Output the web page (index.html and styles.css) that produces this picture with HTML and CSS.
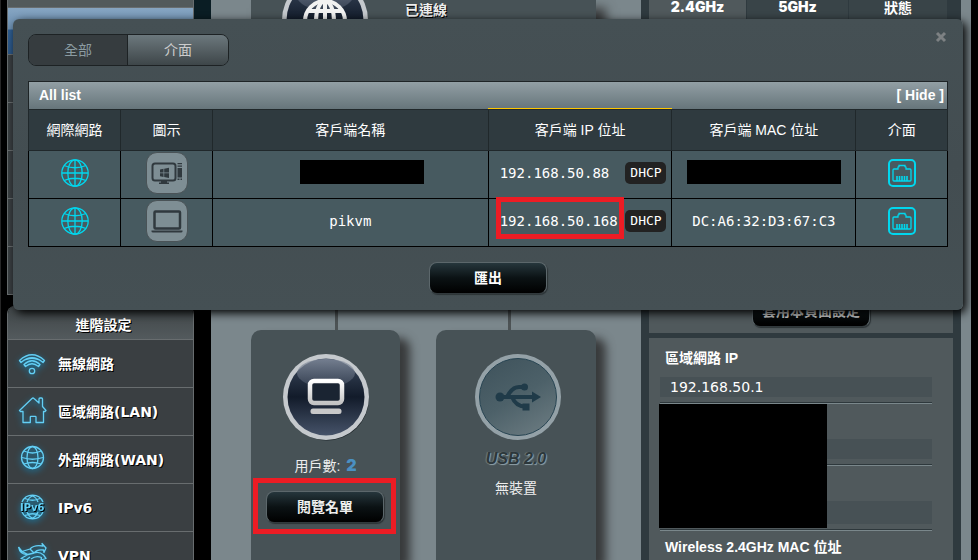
FILE: index.html
```html
<!DOCTYPE html>
<html lang="zh-Hant">
<head>
<meta charset="utf-8">
<title>網路地圖</title>
<link rel="stylesheet" href="styles.css">
</head>
<body>
<svg class="defs" aria-hidden="true">
  <defs>
    <linearGradient id="chrome" x1="0" y1="0" x2="0" y2="1"><stop offset="0" stop-color="#fff"/><stop offset="1" stop-color="#c4c4c4"/></linearGradient>
    <linearGradient id="navy" x1="0" y1="0" x2="0" y2="1"><stop offset="0" stop-color="#3c4a5e"/><stop offset=".5" stop-color="#121b2a"/><stop offset="1" stop-color="#465369"/></linearGradient>
    <linearGradient id="gloss" x1="0" y1="0" x2="0" y2="1"><stop offset="0" stop-color="#8790a0" stop-opacity=".75"/><stop offset="1" stop-color="#566173" stop-opacity=".45"/></linearGradient>
    <linearGradient id="slate" x1=".2" y1="0" x2=".8" y2="1"><stop offset="0" stop-color="#40545d"/><stop offset=".5" stop-color="#4d6169"/><stop offset="1" stop-color="#6a7a80"/></linearGradient>
  </defs>
  <symbol id="globe" viewBox="0 0 28 28">
    <g fill="none" stroke="currentColor" stroke-width="1.3"><circle cx="14" cy="14" r="13.2"/><ellipse cx="14" cy="14" rx="7.2" ry="13.2"/><path d="M14 1v26M1 14h26M3 6.5Q14 11 25 6.5M3 21.5Q14 17 25 21.5"/></g>
  </symbol>
  <symbol id="jack" viewBox="0 0 28 28">
    <g fill="none" stroke="currentColor"><rect x="1" y="1" width="26" height="26" rx="4" stroke-width="2"/><path stroke-width="1.3" d="M6 22q-1 0-1-1V11q0-1 1-1h4V8.500q0-1 1-1V6.500h6v1q1 0 1 1V10h4q1 0 1 1v10q0 1-1 1Z"/><path stroke-width="1.600" d="M9 22v-5M11.500 22v-5M14 22v-5M16.500 22v-5M19 22v-5"/></g>
  </symbol>
</svg>

<div class="page">
  <nav class="sidebar">
    <ul class="menu general">
      <li class="menu-title"></li>
      <li class="active"></li><li></li><li></li><li></li><li></li><li></li>
    </ul>
    <ul class="menu">
      <li class="menu-title">進階設定</li>
      <li><a href="#wireless"><svg class="nav-icon" viewBox="0 0 32 32"><path d="M3.500 12.500Q16 1 28.500 12.500L27 14.500Q16 5 5 14.500ZM8 16.500Q16 9 24 16.500L22.500 18.500Q16 13 9.500 18.500ZM10.500 11.500Q16 9 21.500 11.500"/><circle cx="16" cy="23" r="2.700"/></svg>無線網路</a></li>
      <li><a href="#lan"><svg class="nav-icon" viewBox="0 0 32 32"><path d="M7 15.500H4.500L3.500 14.500 16 2.500q1-1 2 0L23 7V3q0-1 1-1h1.500q1 0 1 1v7.500L30 14.500 29 15.500H27.500V26.500H20V21q0-.7-.7-.7H15q-.7 0-.7.7v5.500H7Z"/></svg>區域網路(LAN)</a></li>
      <li><a href="#wan"><svg class="nav-icon" viewBox="0 0 32 32"><circle cx="16.500" cy="13.500" r="11"/><ellipse cx="16.500" cy="13.500" rx="5.500" ry="11"/><path d="M8 7Q16.500 11 25 7M6 13.500Q16.500 17 27 13.500M8 20Q16.500 17 25 20"/></svg>外部網路(WAN)</a></li>
      <li><a href="#ipv6"><svg class="nav-icon" viewBox="0 0 32 32"><path d="M6 10a11.500 11.500 0 0 1 21 0M6 20a11.500 11.500 0 0 0 21 0M11 10Q13 5 16.500 4Q20 5 22 10M11 20Q13 25 16.500 26Q20 25 22 20M9 6.500Q16.500 10 24 6.500M9 23.500Q16.500 20 24 23.500"/><text class="v6" x="4" y="18.500">IPv6</text></svg>IPv6</a></li>
      <li><a href="#vpn"><svg class="nav-icon" viewBox="0 0 32 32"><path d="M2.500 7 6 11.500 14 9Q18 4.500 27 6L26 3.500 30 8 28 12.500 27.500 10Q21 9 18 13Q23 11 27.500 15L30 18.500 25 20 25.500 17.500Q20 15 15 19M2.500 7Q4 15 12 14.500L5 18.500 10 20 14 17M14 9 18 13 12 14.500M6 11.500 12 14.500"/></svg>VPN</a></li>
    </ul>
  </nav>
  <div class="gutter"></div>

  <div class="content">
    <main class="map">
      <section class="card internet">
        <svg class="orb" viewBox="0 0 88 88"><circle cx="45" cy="45.500" r="42" fill="#20282c"/><circle cx="44" cy="44" r="43" fill="#c5c9cd"/><circle cx="44" cy="44" r="38.500" fill="url(#navy)"/><ellipse cx="44" cy="20" rx="28" ry="14" fill="url(#gloss)"/><g fill="none" stroke="#f2f2f2" stroke-width="4"><circle cx="44" cy="45" r="20"/><ellipse cx="44" cy="45" rx="9" ry="20"/><path d="M44 25v40M24 45h40M28 35h32M28 55h32"/></g></svg>
        <p class="net-state">已連線</p>
      </section>
      <div class="devices">
        <section class="card clients">
          <svg class="orb" viewBox="0 0 88 88"><circle cx="45" cy="45.500" r="42" fill="#20282c"/><circle cx="44" cy="44" r="43" fill="#c5c9cd"/><circle cx="44" cy="44" r="38.500" fill="url(#navy)"/><ellipse cx="44" cy="20" rx="29" ry="14" fill="url(#gloss)"/><rect x="28" y="28" width="32" height="22" rx="4" fill="#1a2432" stroke="url(#chrome)" stroke-width="4.500"/><rect x="28.500" y="55.500" width="31" height="5.500" rx="2.500" fill="#c8c8c8"/></svg>
          <p class="count">用戶數: <b>2</b></p>
          <div class="marked"><button class="btn" type="button">閱覽名單</button></div>
        </section>
        <section class="card usb">
          <svg class="orb" viewBox="0 0 88 88"><circle cx="44" cy="44" r="43" fill="#94a1a7"/><circle cx="44" cy="44" r="38.500" fill="url(#slate)" stroke="#274452"/><g fill="none" stroke="#203b49" stroke-width="4"><path d="M26 44h34M33 44Q38 34 45 34h5M38 44Q42 53.500 51 53.500"/></g><g fill="#203b49"><circle cx="26" cy="44" r="4.500"/><circle cx="50.500" cy="34" r="3.500"/><rect x="48.500" y="50.500" width="7" height="7"/><path d="M58 38.500 67 44 58 49.500Z"/></g></svg>
          <p class="usb-name">USB 2.0</p>
          <p class="usb-state">無裝置</p>
        </section>
      </div>
    </main>

    <aside class="status">
      <div class="status-tabs">
        <button type="button" class="on">2.4GHz</button><button type="button">5GHz</button><button type="button" class="cjk">狀態</button>
      </div>
      <section class="panel apply"><button class="btn" type="button">套用本頁面設定</button></section>
      <section class="panel lan">
        <div class="entry"><h3>區域網路 IP</h3><p class="value">192.168.50.1</p></div>
        <div class="entry"><h3></h3><p class="value"></p></div>
        <div class="entry tall"><h3></h3><p class="value"></p></div>
        <div class="entry"><h3>Wireless 2.4GHz MAC 位址</h3><p class="value"></p></div>
        <div class="redacted"></div>
      </section>
    </aside>
  </div>
</div>

<div class="modal" role="dialog" aria-label="All list">
  <button class="close" type="button" aria-label="關閉"><svg viewBox="0 0 12 12"><path d="M2 2l8 8M10 2l-8 8"/></svg></button>
  <div class="switch"><button type="button" class="pressed">全部</button><button type="button">介面</button></div>
  <div class="list-bar"><span>All list</span><button type="button">[ Hide ]</button></div>
  <table class="list">
    <thead>
      <tr><th class="narrow">網際網路</th><th class="narrow">圖示</th><th class="wide">客戶端名稱</th><th class="mid sorted">客戶端 IP 位址</th><th class="mid">客戶端 MAC 位址</th><th>介面</th></tr>
    </thead>
    <tbody>
      <tr>
        <td><svg class="cyan"><use href="#globe"/></svg></td>
        <td><svg class="device" viewBox="0 0 40 40"><g fill="none" stroke="#30393e"><rect x="5.500" y="10.500" width="23" height="17" rx="2.500" stroke-width="2"/></g><g fill="#30393e"><path d="M13 16.500l3.500-.7v3.700H13ZM17.200 15.700l4.800-1v4.800h-4.800ZM13 20.200h3.500v3.700l-3.500-.7ZM17.200 20.200H22V25l-4.800-1ZM14 28h6v1.500h2V31H12v-1.500h2ZM30.500 10H35v1.300h-4.500ZM30.500 12.500H35v1.300h-4.500ZM30.500 15H35v9.500h-4.500ZM30.500 25.500h2V27h-2ZM33.500 25.500H35V27h-1.500Z"/></g></svg></td>
        <td><span class="mask name-mask"></span></td>
        <td><div class="ip"><span>192.168.50.88</span><span class="badge">DHCP</span></div></td>
        <td><span class="mask mac-mask"></span></td>
        <td><svg class="cyan"><use href="#jack"/></svg></td>
      </tr>
      <tr>
        <td><svg class="cyan"><use href="#globe"/></svg></td>
        <td><svg class="device" viewBox="0 0 40 40"><rect x="7.500" y="10.500" width="25.500" height="17" rx="1" fill="none" stroke="#30393e" stroke-width="2.500"/><path fill="#30393e" d="M4.500 29.500h31v1q0 1-1.500 1H6q-1.500 0-1.500-1Z"/></svg></td>
        <td>pikvm</td>
        <td><div class="ip flagged"><span>192.168.50.168</span><span class="badge">DHCP</span></div></td>
        <td>DC:A6:32:D3:67:C3</td>
        <td><svg class="cyan"><use href="#jack"/></svg></td>
      </tr>
    </tbody>
  </table>
  <div class="actions"><button class="btn" type="button">匯出</button></div>
</div>
</body>
</html>
```
FILE: styles.css
```css
*, *::before, *::after { box-sizing: border-box; }
body {
  margin: 0;
  height: 100vh;
  overflow: hidden;
  position: relative;
  background: #000;
  color: #fff;
  font: 14px/20px "Liberation Sans", "Noto Sans CJK TC", sans-serif;
}
p, h3, ul { margin: 0; padding: 0; }
ul { list-style: none; }
button { font: inherit; color: inherit; border: 0; background: none; padding: 0; cursor: pointer; }
.defs { position: absolute; width: 0; height: 0; }

.page {
  display: flex;
  height: 100vh;
  overflow: hidden;
  padding: 0 7px 0 6px;
  border-left: 1px solid #262626;
}

/* sidebar */
.sidebar { flex: 0 0 187px; font-family: "DejaVu Sans", "Noto Sans CJK TC", sans-serif; font-weight: bold; }
.menu {
  border: 1px solid #686d6f;
  border-top: 0;
  border-radius: 8px 8px 0 0;
  overflow: hidden;
  margin-bottom: 11px;
  text-shadow: 1px 1px 0 #000;
}
.menu li { height: 48px; background: #3a3f42; border-top: 1px solid #686d6f; }
.menu .menu-title {
  height: 33px;
  border-top: 0;
  line-height: 39px;
  padding-left: 6px;
  text-align: center;
  background: linear-gradient(#3f4547, #535a5d);
}
.general { border-radius: 0; }
.menu.general .menu-title { height: 7px; background: #525a5c; }
.menu.general .active { height: 47px; background: linear-gradient(#86a5c2, #6c90b2 21px, #2f5f93 22px, #2b5686); }
.menu a { display: flex; align-items: center; gap: 10px; height: 47px; padding-left: 8px; color: #fff; text-decoration: none; }
.nav-icon {
  width: 32px;
  height: 32px;
  fill: none;
  stroke: #63cff5;
  stroke-width: 1.3;
  stroke-linejoin: round;
  filter: drop-shadow(0 2px 3px #1187b8);
}
.v6 { font: bold 10px "DejaVu Sans", sans-serif; fill: #63cff5; stroke: none; }
.gutter { flex: 0 0 17px; background: linear-gradient(#0a1d24, #0a1d24 100px, #000 280px); }

/* network map */
.content { flex: 1; display: flex; background: #7b878c; padding-right: 10px; }
.map { flex: 1; padding: 0 45px 0 40px; display: flex; flex-direction: column; }
.card { background: #475256; box-shadow: 10px 8px 10px #383a3b; position: relative; }
.orb { width: 88px; height: 88px; display: block; }
.internet { height: 200px; display: flex; }
.internet .orb { margin: -24px 0 0 30px; }
.net-state { margin-left: 36px; font-weight: bold; text-shadow: 1px 1px 0 #000; color: #eee; }
.devices { flex: 1; display: flex; gap: 36px; padding-top: 130px; }
.devices .card { border-radius: 10px 10px 0 0; padding-top: 23px; display: flex; flex-direction: column; align-items: center; color: #eee; }
.devices .card::before {
  content: "";
  position: absolute;
  bottom: 100%;
  left: 84px;
  height: 130px;
  width: 3px;
  background: #4d5355;
}
.devices .usb::before { left: 72px; }
.clients { flex: 149; }
.usb { flex: 160; }
.usb .orb { margin-left: 4px; }
.count { margin-top: 14px; }
.count b { font: 900 16px/20px Inter, sans-serif; color: #4a90c2; margin-left: 2px; }
.marked { border: 5px solid #ed1c24; padding: 8px; margin-top: 2px; width: 143px; height: 56px; margin-right: 2px; }
.usb-name {
  margin-top: 8px;
  font: italic bold 16px/20px "Liberation Sans Narrow", "Liberation Sans", sans-serif;
  color: #2c373b;
  text-shadow: 1px 1px 1px #91a3aa, -1px 0 1px #6d7f86;
}
.usb-state { margin-top: 9px; }

.btn {
  display: block;
  width: 118px;
  height: 32px;
  border: 1px solid #5c676b;
  border-bottom-color: #31393c;
  border-radius: 8px;
  background: linear-gradient(#26363c, #0b1214 50%, #000);
  box-shadow: 1px 1px 1px #2c3336;
  font-weight: bold;
  line-height: 30px;
  text-align: center;
}

/* status column */
.status { flex: 0 0 320px; padding: 0 8px; background: #2f3a3f; display: flex; flex-direction: column; }
.status-tabs { display: grid; grid-template-columns: 97px 101px 98px; gap: 1px; height: 20px; }
.status-tabs button { background: #394448; font: 900 14px/14px Inter, sans-serif; padding-bottom: 6px; }
.status-tabs .on { background: #50595c; }
.status-tabs .cjk { font: bold 14px/14px "Noto Sans CJK TC", sans-serif; }
.panel { background: #50595c; }
.apply { flex: 0 0 313px; display: flex; justify-content: center; align-items: flex-end; padding: 0 0 6px 20px; color: #d0d0d0; }
.lan { position: relative; flex: 1; margin-top: 5px; padding: 4px 21px 0 11px; overflow: hidden; }
.entry { border-bottom: 1px solid #7a878b; }
.entry::after { content: ""; display: block; margin-top: 5px; border-bottom: 1px solid #2e383c; }
.entry h3 { height: 35px; padding-left: 5px; font-size: 14px; line-height: 32px; }
.value { height: 20px; background: #475155; padding-left: 10px; font-family: "DejaVu Sans", sans-serif; }
.tall .value { height: 23px; }
.redacted { position: absolute; left: 10px; top: 66px; width: 168px; height: 124px; background: #000; }

/* client list dialog */
.modal {
  position: absolute;
  left: 13px;
  right: 15px;
  top: 19px;
  padding: 15px;
  border-radius: 6px;
  background: linear-gradient(#455054, #434d51 50%, #455054);
  box-shadow: 3px 3px 10px #000;
}
.close { position: absolute; right: 16px; top: 12px; width: 12px; height: 12px; }
.close svg { display: block; width: 12px; height: 12px; stroke: #7d8183; stroke-width: 3; }
.switch {
  display: inline-flex;
  width: 201px;
  height: 32px;
  border: 1px solid #1d2224;
  border-radius: 8px;
  overflow: hidden;
  vertical-align: top;
}
.switch button { flex: 1; background: linear-gradient(#6c787d, #3e4649); color: #ccc; }
.switch .pressed { flex: 0 0 99px; background: #363c3f; border-right: 1px solid #1d2224; color: #8b9ba1; }
.list-bar {
  display: flex;
  justify-content: space-between;
  margin-top: 15px;
  padding: 0 3px 0 10px;
  height: 28px;
  line-height: 27px;
  border: 1px solid #1e2426;
  border-bottom: 0;
  background: linear-gradient(#929fa4, #66757b);
  font-weight: bold;
}
.list { width: 100%; border-collapse: collapse; table-layout: fixed; text-align: center; }
.list th { height: 41px; border: 1px solid #20282b; background: #2f3a3f; font-weight: normal; padding: 0; }
.list .sorted { box-shadow: 0 -2px 0 #ffc800; }
.list .narrow { width: 92px; }
.list .mid { width: 20%; }
.list .wide { width: 30%; }
.list td { height: 48px; border: 1px solid #000; background: #475a60; padding: 0 0 3px; font-family: "DejaVu Sans Mono", monospace; }
.list svg { display: block; margin: 0 auto; }
.cyan { width: 28px; height: 28px; color: #00d7ee; }
.list .device { width: 42px; height: 42px; border-radius: 11px; background: #7e8e94; border: 1px solid #4a5357; }
.mask { display: block; height: 24px; background: #000; margin: 0 auto 3px; }
.name-mask { width: 124px; margin-right: 64px; }
.mac-mask { width: 154px; }
.ip { position: relative; display: flex; justify-content: space-between; align-items: center; padding: 0 5px 0 11px; }
.badge { width: 41px; height: 22px; border-radius: 5px; background: #222; font-size: 13px; line-height: 22px; }
.flagged::after { content: ""; position: absolute; left: 7px; top: -13px; width: 128px; height: 42px; border: 5px solid #ed1c24; }
.actions { display: flex; justify-content: center; margin-top: 15px; padding-bottom: 1px; }
```
